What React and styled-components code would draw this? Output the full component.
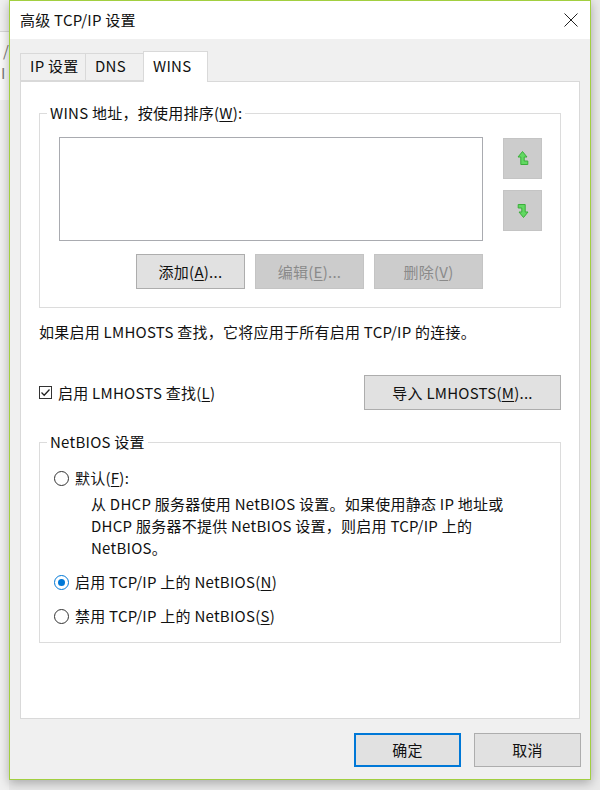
import React from "react";
import styled, { createGlobalStyle } from "styled-components";

const GlobalStyle = createGlobalStyle`
  html, body {
    margin: 0;
    padding: 0;
  }
  body {
    font-family: "Noto Sans CJK SC", "Noto Sans", sans-serif;
    font-size: 15px;
    letter-spacing: 0.25px;
    color: #1a1a1a;
    background: #e9e9e9;
  }
  u {
    text-underline-offset: 2px;
  }
`;

const Page = styled.div`
  display: flex;
  width: 600px;
  height: 790px;
  overflow: hidden;
`;

// the window sitting behind the dialog, only its right edge shows
const BackWindow = styled.div`
  width: 9px;
  flex-shrink: 0;
  display: flex;
  flex-direction: column;
  background: #f0f0f0;
  overflow: hidden;
`;

const BackHeader = styled.div`
  height: 31px;
  border-bottom: 1px solid #d6d6d6;
  background: #f0f0f0;
`;

const BackContent = styled.div`
  height: 60px;
  background: #fafafa;
  padding-top: 8px;
  color: #777;
  font-size: 15px;
  line-height: 22px;
`;

const BackLine = styled.div`
  padding-left: ${(p) => p.$indent}px;
`;

const Dialog = styled.div`
  width: 582px;
  height: 780px;
  box-sizing: border-box;
  flex-shrink: 0;
  border: 1px solid #a2cf40;
  background: #f0f0f0;
  display: flex;
  flex-direction: column;
  box-shadow: 0 3px 10px rgba(0, 0, 0, 0.28);
`;

const TitleBar = styled.div`
  height: 38px;
  background: #fff;
  display: flex;
  align-items: center;
  justify-content: space-between;
  padding: 0 12px 0 10px;
`;

const Title = styled.span`
  font-size: 15px;
  line-height: 20px;
  color: #111;
`;

const CloseButton = styled.button`
  border: 0;
  background: transparent;
  padding: 0;
  width: 14px;
  height: 14px;
  display: flex;
`;

const Body = styled.div`
  flex: 1;
  display: flex;
  flex-direction: column;
  padding: 12px 10px 0 10px;
`;

const TabStrip = styled.div`
  height: 30px;
  display: flex;
  align-items: flex-end;
  position: relative;
  z-index: 1;
`;

const Tab = styled.div`
  box-sizing: border-box;
  width: ${(p) => p.$width}px;
  height: ${(p) => (p.$active ? 31 : 28)}px;
  margin-bottom: ${(p) => (p.$active ? -1 : 0)}px;
  margin-left: ${(p) => (p.$first ? 0 : -1)}px;
  padding-left: 9px;
  padding-top: ${(p) => (p.$active ? 4 : 2)}px;
  border: 1px solid #d9d9d9;
  border-bottom: ${(p) => (p.$active ? "none" : "1px solid #d9d9d9")};
  background: ${(p) => (p.$active ? "#fff" : "#f0f0f0")};
  line-height: 20px;
  color: #111;
`;

const Panel = styled.div`
  box-sizing: border-box;
  height: 638px;
  background: #fff;
  border: 1px solid #d9d9d9;
  padding: 21px 18px 0 18px;
  display: flex;
  flex-direction: column;
`;

const GroupBox = styled.fieldset`
  margin: 0;
  min-width: 0;
  border: 1px solid #dcdcdc;
  padding: 0;
`;

const GroupContent = styled.div`
  display: flex;
  flex-direction: column;
  padding: ${(p) => p.$padding};
`;

const Legend = styled.legend`
  margin-left: 7px;
  padding: 0 3px;
  line-height: 20px;
  color: #111;
`;

const ListRow = styled.div`
  display: flex;
  gap: 20px;
`;

const ListColumn = styled.div`
  width: 424px;
  display: flex;
  flex-direction: column;
`;

const ListBox = styled.div`
  box-sizing: border-box;
  height: 104px;
  border: 1px solid #a9abb0;
  background: #fff;
`;

const ArrowColumn = styled.div`
  display: flex;
  flex-direction: column;
  gap: 11px;
  padding-top: 1px;
`;

const ArrowButton = styled.button`
  box-sizing: border-box;
  width: 39px;
  height: 41px;
  padding: 0;
  border: 1px solid #c4c4c4;
  background: #cccccc;
  display: flex;
  align-items: center;
  justify-content: center;
`;

const ButtonRow = styled.div`
  display: flex;
  justify-content: flex-end;
  gap: 10px;
  margin-top: 13px;
`;

const PushButton = styled.button`
  box-sizing: border-box;
  width: ${(p) => p.$width}px;
  height: ${(p) => p.$height || 35}px;
  padding: 0;
  font-family: inherit;
  font-size: 15px;
  letter-spacing: 0.25px;
  line-height: 20px;
  color: ${(p) => (p.disabled ? "#8a8a8a" : "#111")};
  background: ${(p) => (p.disabled ? "#cccccc" : "#e1e1e1")};
  border: ${(p) =>
    p.$default
      ? "2px solid #0078d7"
      : p.disabled
      ? "1px solid #c4c4c4"
      : "1px solid #adadad"};
`;

const InfoText = styled.div`
  margin-top: 14px;
  line-height: 20px;
  color: #111;
  white-space: nowrap;
`;

const OptionRow = styled.div`
  margin-top: 33px;
  margin-bottom: 22px;
  display: flex;
  align-items: center;
  justify-content: space-between;
`;

const CheckLabel = styled.label`
  display: flex;
  align-items: center;
  gap: 6px;
  line-height: 20px;
  color: #111;
`;

const CheckBox = styled.span`
  box-sizing: border-box;
  width: 13px;
  height: 13px;
  border: 1px solid #333;
  background: #fff;
  display: flex;
  align-items: center;
  justify-content: center;
`;

const RadioRow = styled.label`
  display: flex;
  align-items: center;
  gap: 6px;
  height: 20px;
  line-height: 20px;
  margin-top: ${(p) => p.$top || 0}px;
  color: #111;
`;

const Radio = styled.span`
  box-sizing: border-box;
  width: 15px;
  height: 15px;
  border-radius: 50%;
  border: 1px solid ${(p) => (p.$checked ? "#0078d7" : "#333")};
  background: #fff;
  display: flex;
  align-items: center;
  justify-content: center;

  &::after {
    content: "";
    width: 7px;
    height: 7px;
    border-radius: 50%;
    background: ${(p) => (p.$checked ? "#0078d7" : "transparent")};
  }
`;

const Description = styled.div`
  margin-top: 5px;
  margin-left: 37px;
  line-height: 22px;
  color: #111;
`;

const Footer = styled.div`
  display: flex;
  justify-content: flex-end;
  gap: 13px;
  margin-top: 14px;
  margin-right: -1px;
`;

const UpArrow = () => (
  <svg width="12" height="17" viewBox="0 0 12 17">
    <path
      d="M1 7 L5.5 1.5 L10 7 L7.2 7 L7.2 11 L10.8 11 L10.8 14.5 L3.8 14.5 L3.8 7 Z"
      fill="#62d862"
      stroke="#3aaf3a"
      strokeWidth="1"
      strokeLinejoin="round"
    />
  </svg>
);

const DownArrow = () => (
  <svg width="12" height="17" viewBox="0 0 12 17">
    <path
      d="M1.2 2.5 L8.2 2.5 L8.2 10 L11 10 L6.5 15.5 L2 10 L4.8 10 L4.8 6 L1.2 6 Z"
      fill="#62d862"
      stroke="#3aaf3a"
      strokeWidth="1"
      strokeLinejoin="round"
    />
  </svg>
);

export default function App() {
  return (
    <>
      <GlobalStyle />
      <Page>
        <BackWindow>
          <BackHeader />
          <BackContent>
            <BackLine $indent={3}>/</BackLine>
            <BackLine $indent={1}>I</BackLine>
          </BackContent>
        </BackWindow>

        <Dialog>
          <TitleBar>
            <Title>高级 TCP/IP 设置</Title>
            <CloseButton aria-label="关闭">
              <svg width="14" height="14" viewBox="0 0 14 14">
                <path d="M0.5 0.5 L13.5 13.5 M13.5 0.5 L0.5 13.5" stroke="#222" strokeWidth="1" />
              </svg>
            </CloseButton>
          </TitleBar>

          <Body>
            <TabStrip>
              <Tab $first $width={66}>IP 设置</Tab>
              <Tab $width={59}>DNS</Tab>
              <Tab $active $width={65}>WINS</Tab>
            </TabStrip>

            <Panel>
              <GroupBox>
                <Legend>
                  WINS 地址，按使用排序(<u>W</u>):
                </Legend>
                <GroupContent $padding="14px 18px 18px 19px">
                  <ListRow>
                    <ListColumn>
                      <ListBox />
                      <ButtonRow>
                        <PushButton $width={109}>
                          添加(<u>A</u>)...
                        </PushButton>
                        <PushButton $width={109} disabled>
                          编辑(<u>E</u>)...
                        </PushButton>
                        <PushButton $width={109} disabled>
                          删除(<u>V</u>)
                        </PushButton>
                      </ButtonRow>
                    </ListColumn>
                    <ArrowColumn>
                      <ArrowButton aria-label="上移">
                        <UpArrow />
                      </ArrowButton>
                      <ArrowButton aria-label="下移">
                        <DownArrow />
                      </ArrowButton>
                    </ArrowColumn>
                  </ListRow>
                </GroupContent>
              </GroupBox>

              <InfoText>
                如果启用 LMHOSTS 查找，它将应用于所有启用 TCP/IP 的连接。
              </InfoText>

              <OptionRow>
                <CheckLabel>
                  <CheckBox>
                    <svg width="11" height="11" viewBox="0 0 11 11">
                      <path d="M1.5 5.5 L4.2 8.2 L9.5 2.5" fill="none" stroke="#222" strokeWidth="1.3" />
                    </svg>
                  </CheckBox>
                  <span>
                    启用 LMHOSTS 查找(<u>L</u>)
                  </span>
                </CheckLabel>
                <PushButton $width={197} $height={35}>
                  导入 LMHOSTS(<u>M</u>)...
                </PushButton>
              </OptionRow>

              <GroupBox>
                <Legend>NetBIOS 设置</Legend>
                <GroupContent $padding="16px 14px 16px 14px">
                  <RadioRow>
                    <Radio />
                    <span>
                      默认(<u>F</u>):
                    </span>
                  </RadioRow>
                  <Description>
                    从 DHCP 服务器使用 NetBIOS 设置。如果使用静态 IP 地址或
                    <br />
                    DHCP 服务器不提供 NetBIOS 设置，则启用 TCP/IP 上的
                    <br />
                    NetBIOS。
                  </Description>
                  <RadioRow $top={13}>
                    <Radio $checked />
                    <span>
                      启用 TCP/IP 上的 NetBIOS(<u>N</u>)
                    </span>
                  </RadioRow>
                  <RadioRow $top={14}>
                    <Radio />
                    <span>
                      禁用 TCP/IP 上的 NetBIOS(<u>S</u>)
                    </span>
                  </RadioRow>
                </GroupContent>
              </GroupBox>
            </Panel>

            <Footer>
              <PushButton $width={107} $height={34} $default>
                确定
              </PushButton>
              <PushButton $width={107} $height={34}>
                取消
              </PushButton>
            </Footer>
          </Body>
        </Dialog>
      </Page>
    </>
  );
}
